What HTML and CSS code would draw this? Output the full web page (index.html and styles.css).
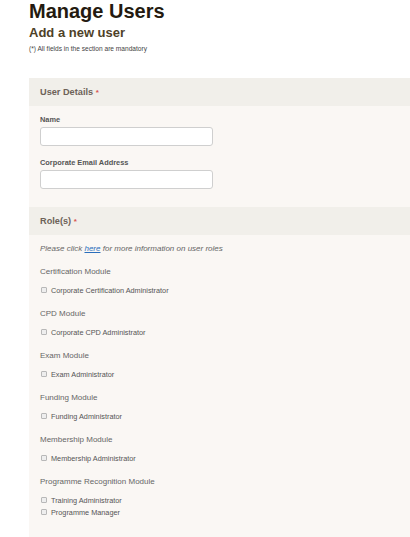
FILE: index.html
```html
<!DOCTYPE html>
<html lang="en">
<head>
<meta charset="utf-8">
<title>Manage Users</title>
<link rel="stylesheet" href="styles.css">
</head>
<body>
<div class="page">
  <h1 class="title">Manage Users</h1>
  <h2 class="subtitle">Add a new user</h2>
  <p class="note">(*) All fields in the section are mandatory</p>

  <section class="panel">
    <div class="panel-head">User Details <span class="req">*</span></div>
    <div class="panel-body details">
      <div class="field">
        <label class="field-label" for="name">Name</label>
        <input class="text-input" id="name" type="text">
      </div>
      <div class="field">
        <label class="field-label" for="email">Corporate Email Address</label>
        <input class="text-input" id="email" type="text">
      </div>
    </div>

    <div class="panel-head">Role(s) <span class="req">*</span></div>
    <div class="panel-body roles">
      <p class="hint">Please click <a class="hint-link" href="#">here</a> for more information on user roles</p>

      <div class="module">
        <div class="module-name">Certification Module</div>
        <label class="check"><input class="box" type="checkbox">Corporate Certification Administrator</label>
      </div>
      <div class="module">
        <div class="module-name">CPD Module</div>
        <label class="check"><input class="box" type="checkbox">Corporate CPD Administrator</label>
      </div>
      <div class="module">
        <div class="module-name">Exam Module</div>
        <label class="check"><input class="box" type="checkbox">Exam Administrator</label>
      </div>
      <div class="module">
        <div class="module-name">Funding Module</div>
        <label class="check"><input class="box" type="checkbox">Funding Administrator</label>
      </div>
      <div class="module">
        <div class="module-name">Membership Module</div>
        <label class="check"><input class="box" type="checkbox">Membership Administrator</label>
      </div>
      <div class="module">
        <div class="module-name">Programme Recognition Module</div>
        <label class="check"><input class="box" type="checkbox">Training Administrator</label>
        <label class="check"><input class="box" type="checkbox">Programme Manager</label>
      </div>
    </div>
  </section>
</div>
</body>
</html>
```

FILE: styles.css
```css
html, body {
  margin: 0;
  padding: 0;
  background: #ffffff;
}

body {
  font-family: "Liberation Sans", Arial, Helvetica, sans-serif;
  color: #555;
}

.page {
  padding-left: 29px;
}

.title {
  margin: 0;
  font-size: 20px;
  line-height: 23px;
  font-weight: bold;
  color: #241a10;
}

.subtitle {
  margin: 2px 0 0;
  font-size: 13px;
  line-height: 16px;
  font-weight: bold;
  color: #4e4128;
}

.note {
  margin: 4px 0 0;
  font-size: 6.6px;
  line-height: 8px;
  color: #444;
}

.panel {
  margin-top: 25px;
  background: #faf7f4;
  min-height: 470px;
}

.panel-head {
  height: 28px;
  line-height: 28px;
  padding-left: 11px;
  background: #f1efea;
  font-size: 9.2px;
  font-weight: bold;
  color: #6d6258;
}

.req {
  color: #d9534f;
  font-size: 8px;
}

.panel-body {
  padding-left: 11px;
}

.details {
  padding-top: 8px;
  padding-bottom: 18px;
  display: flex;
  flex-direction: column;
  gap: 11px;
}

.field {
  display: flex;
  flex-direction: column;
}

.field-label {
  font-size: 7.4px;
  line-height: 12px;
  font-weight: bold;
  color: #555;
  margin-bottom: 1px;
}

.text-input {
  box-sizing: border-box;
  width: 173px;
  height: 19px;
  margin: 0;
  border: 1px solid #cfcfcf;
  border-radius: 3px;
  background: #ffffff;
}

.roles {
  padding-top: 8px;
  padding-bottom: 20px;
}

.hint {
  margin: 0 0 11px;
  font-size: 8px;
  line-height: 12px;
  font-style: italic;
  color: #666;
}

.hint-link {
  color: #2a6ebb;
  text-decoration: underline;
}

.module {
  display: flex;
  flex-direction: column;
  margin-bottom: 12px;
}

.module-name {
  font-size: 8px;
  line-height: 12px;
  color: #666;
  margin-bottom: 6px;
}

.check {
  display: flex;
  align-items: center;
  height: 12px;
  font-size: 7.3px;
  color: #555;
}

.box {
  appearance: none;
  -webkit-appearance: none;
  box-sizing: border-box;
  width: 6px;
  height: 6px;
  margin: 0 4px 0 1px;
  border: 1px solid #b8b8b8;
  border-radius: 1px;
  background: #eeeeee;
}
```
